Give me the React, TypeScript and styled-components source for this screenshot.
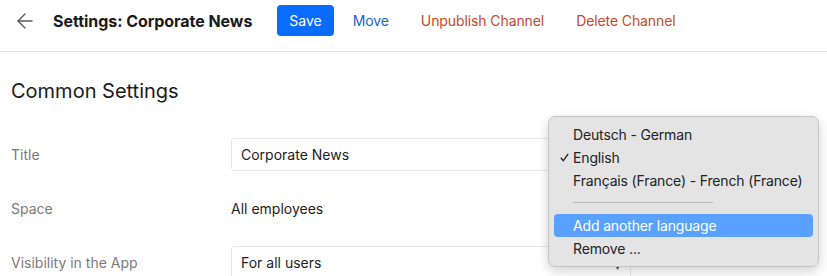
import styled, { createGlobalStyle } from "styled-components";
import { ArrowLeft } from "lucide-react";

const GlobalStyle = createGlobalStyle`
  body {
    margin: 0;
    background: #ffffff;
    font-family: Inter, "Liberation Sans", sans-serif;
    color: #1d1d1f;
  }
`;

interface Row {
  label: string;
  kind: "input" | "text" | "select";
  value: string;
}

const rows: Row[] = [
  { label: "Title", kind: "input", value: "Corporate News" },
  { label: "Space", kind: "text", value: "All employees" },
  { label: "Visibility in the App", kind: "select", value: "For all users" },
];

const languages = [
  { name: "Deutsch - German", checked: false },
  { name: "English", checked: true },
  { name: "Français (France) - French (France)", checked: false },
];

export default function App() {
  return (
    <Page>
      <GlobalStyle />
      <Header>
        <BackButton>
          <ArrowLeft size={24} strokeWidth={1.3} />
        </BackButton>
        <PageTitle>Settings: Corporate News</PageTitle>
        <SaveButton>Save</SaveButton>
        <LinkButton tone="blue">Move</LinkButton>
        <LinkButton tone="red">Unpublish Channel</LinkButton>
        <LinkButton tone="red">Delete Channel</LinkButton>
      </Header>
      <Body>
        <SectionTitle>Common Settings</SectionTitle>
        <Form>
          {rows.map((row) => (
            <FieldRow key={row.label}>
              <Label>{row.label}</Label>
              {row.kind === "input" && <TextBox>{row.value}</TextBox>}
              {row.kind === "text" && <Plain>{row.value}</Plain>}
              {row.kind === "select" && (
                <TextBox>
                  {row.value}
                  <Caret>▾</Caret>
                </TextBox>
              )}
            </FieldRow>
          ))}
        </Form>
        <Menu>
          {languages.map((lang) => (
            <MenuItem key={lang.name}>
              <Check>
                {lang.checked && (
                  <svg width="9" height="9" viewBox="0 0 9 9">
                    <path d="M0.8 4.8 L3.3 7.6 L8.2 0.8" fill="none" stroke="#222" strokeWidth="1.3" />
                  </svg>
                )}
              </Check>
              {lang.name}
            </MenuItem>
          ))}
          <Separator />
          <MenuItem active>
            <Check />
            Add another language
          </MenuItem>
          <MenuItem>
            <Check />
            Remove ...
          </MenuItem>
        </Menu>
      </Body>
    </Page>
  );
}

const Page = styled.div`
  width: 827px;
  height: 276px;
  overflow: hidden;
`;

const Header = styled.div`
  display: flex;
  align-items: center;
  height: 52px;
  padding: 0 0 10px 13px;
  border-bottom: 1px solid #e4e4e4;
  box-sizing: border-box;
  margin-bottom: 1px;
`;

const BackButton = styled.div`
  display: flex;
  align-items: center;
  color: #555;
  width: 40px;
`;

const PageTitle = styled.h1`
  font-size: 16px;
  font-weight: 700;
  margin: 0 25px 0 0;
  color: #1a1a1a;
  letter-spacing: -0.05px;
`;

const SaveButton = styled.button`
  height: 31px;
  padding: 0 12px;
  border: none;
  border-radius: 4px;
  background: #0a6cff;
  color: #ffffff;
  font-family: inherit;
  font-size: 14px;
  margin-right: 3px;
`;

const LinkButton = styled.button<{ tone: "blue" | "red" }>`
  border: none;
  background: none;
  padding: 0 16px;
  font-family: inherit;
  font-size: 14px;
  letter-spacing: -0.1px;
  color: ${(p) => (p.tone === "blue" ? "#1b5fcc" : "#c9472d")};
`;

const Body = styled.div`
  position: relative;
  padding: 0 11px;
`;

const SectionTitle = styled.h2`
  font-size: 20px;
  font-weight: 400;
  margin: 0;
  height: 74px;
  line-height: 76px;
  color: #1a1a1a;
`;

const Form = styled.div`
  display: flex;
  flex-direction: column;
  gap: 21px;
  padding-top: 11px;
`;

const FieldRow = styled.div`
  display: flex;
  align-items: center;
  height: 33px;
`;

const Label = styled.div`
  width: 220px;
  font-size: 14px;
  color: #7a7a7a;
`;

const TextBox = styled.div`
  position: relative;
  width: 400px;
  height: 33px;
  box-sizing: border-box;
  border: 1px solid #e6e6e6;
  border-radius: 3px;
  padding: 0 9px;
  display: flex;
  align-items: center;
  font-size: 14px;
  color: #1d1d1f;
`;

const Plain = styled.div`
  font-size: 14px;
  color: #1d1d1f;
`;

const Caret = styled.span`
  position: absolute;
  right: 10px;
  top: 13px;
  font-size: 10px;
  color: #444;
`;

const Menu = styled.div`
  position: absolute;
  left: 548px;
  top: 63px;
  width: 271px;
  box-sizing: border-box;
  padding: 6px 5px;
  background: #e4e4e4;
  border: 1px solid #c6c6c6;
  border-radius: 7px;
  box-shadow: 0 4px 12px rgba(0, 0, 0, 0.18);
  font-size: 14px;
  letter-spacing: -0.15px;
  color: #222;
`;

const MenuItem = styled.div<{ active?: boolean }>`
  display: flex;
  align-items: center;
  height: 23px;
  border-radius: 4px;
  background: ${(p) => (p.active ? "#5aa0ff" : "transparent")};
  color: ${(p) => (p.active ? "#ffffff" : "#222")};
`;

const Check = styled.span`
  display: flex;
  align-items: center;
  width: 19px;
  padding-left: 6px;
  box-sizing: border-box;
`;

const Separator = styled.div`
  height: 1px;
  width: 140px;
  margin: 10px 0 11px 19px;
  background: #b9b9b9;
`;
